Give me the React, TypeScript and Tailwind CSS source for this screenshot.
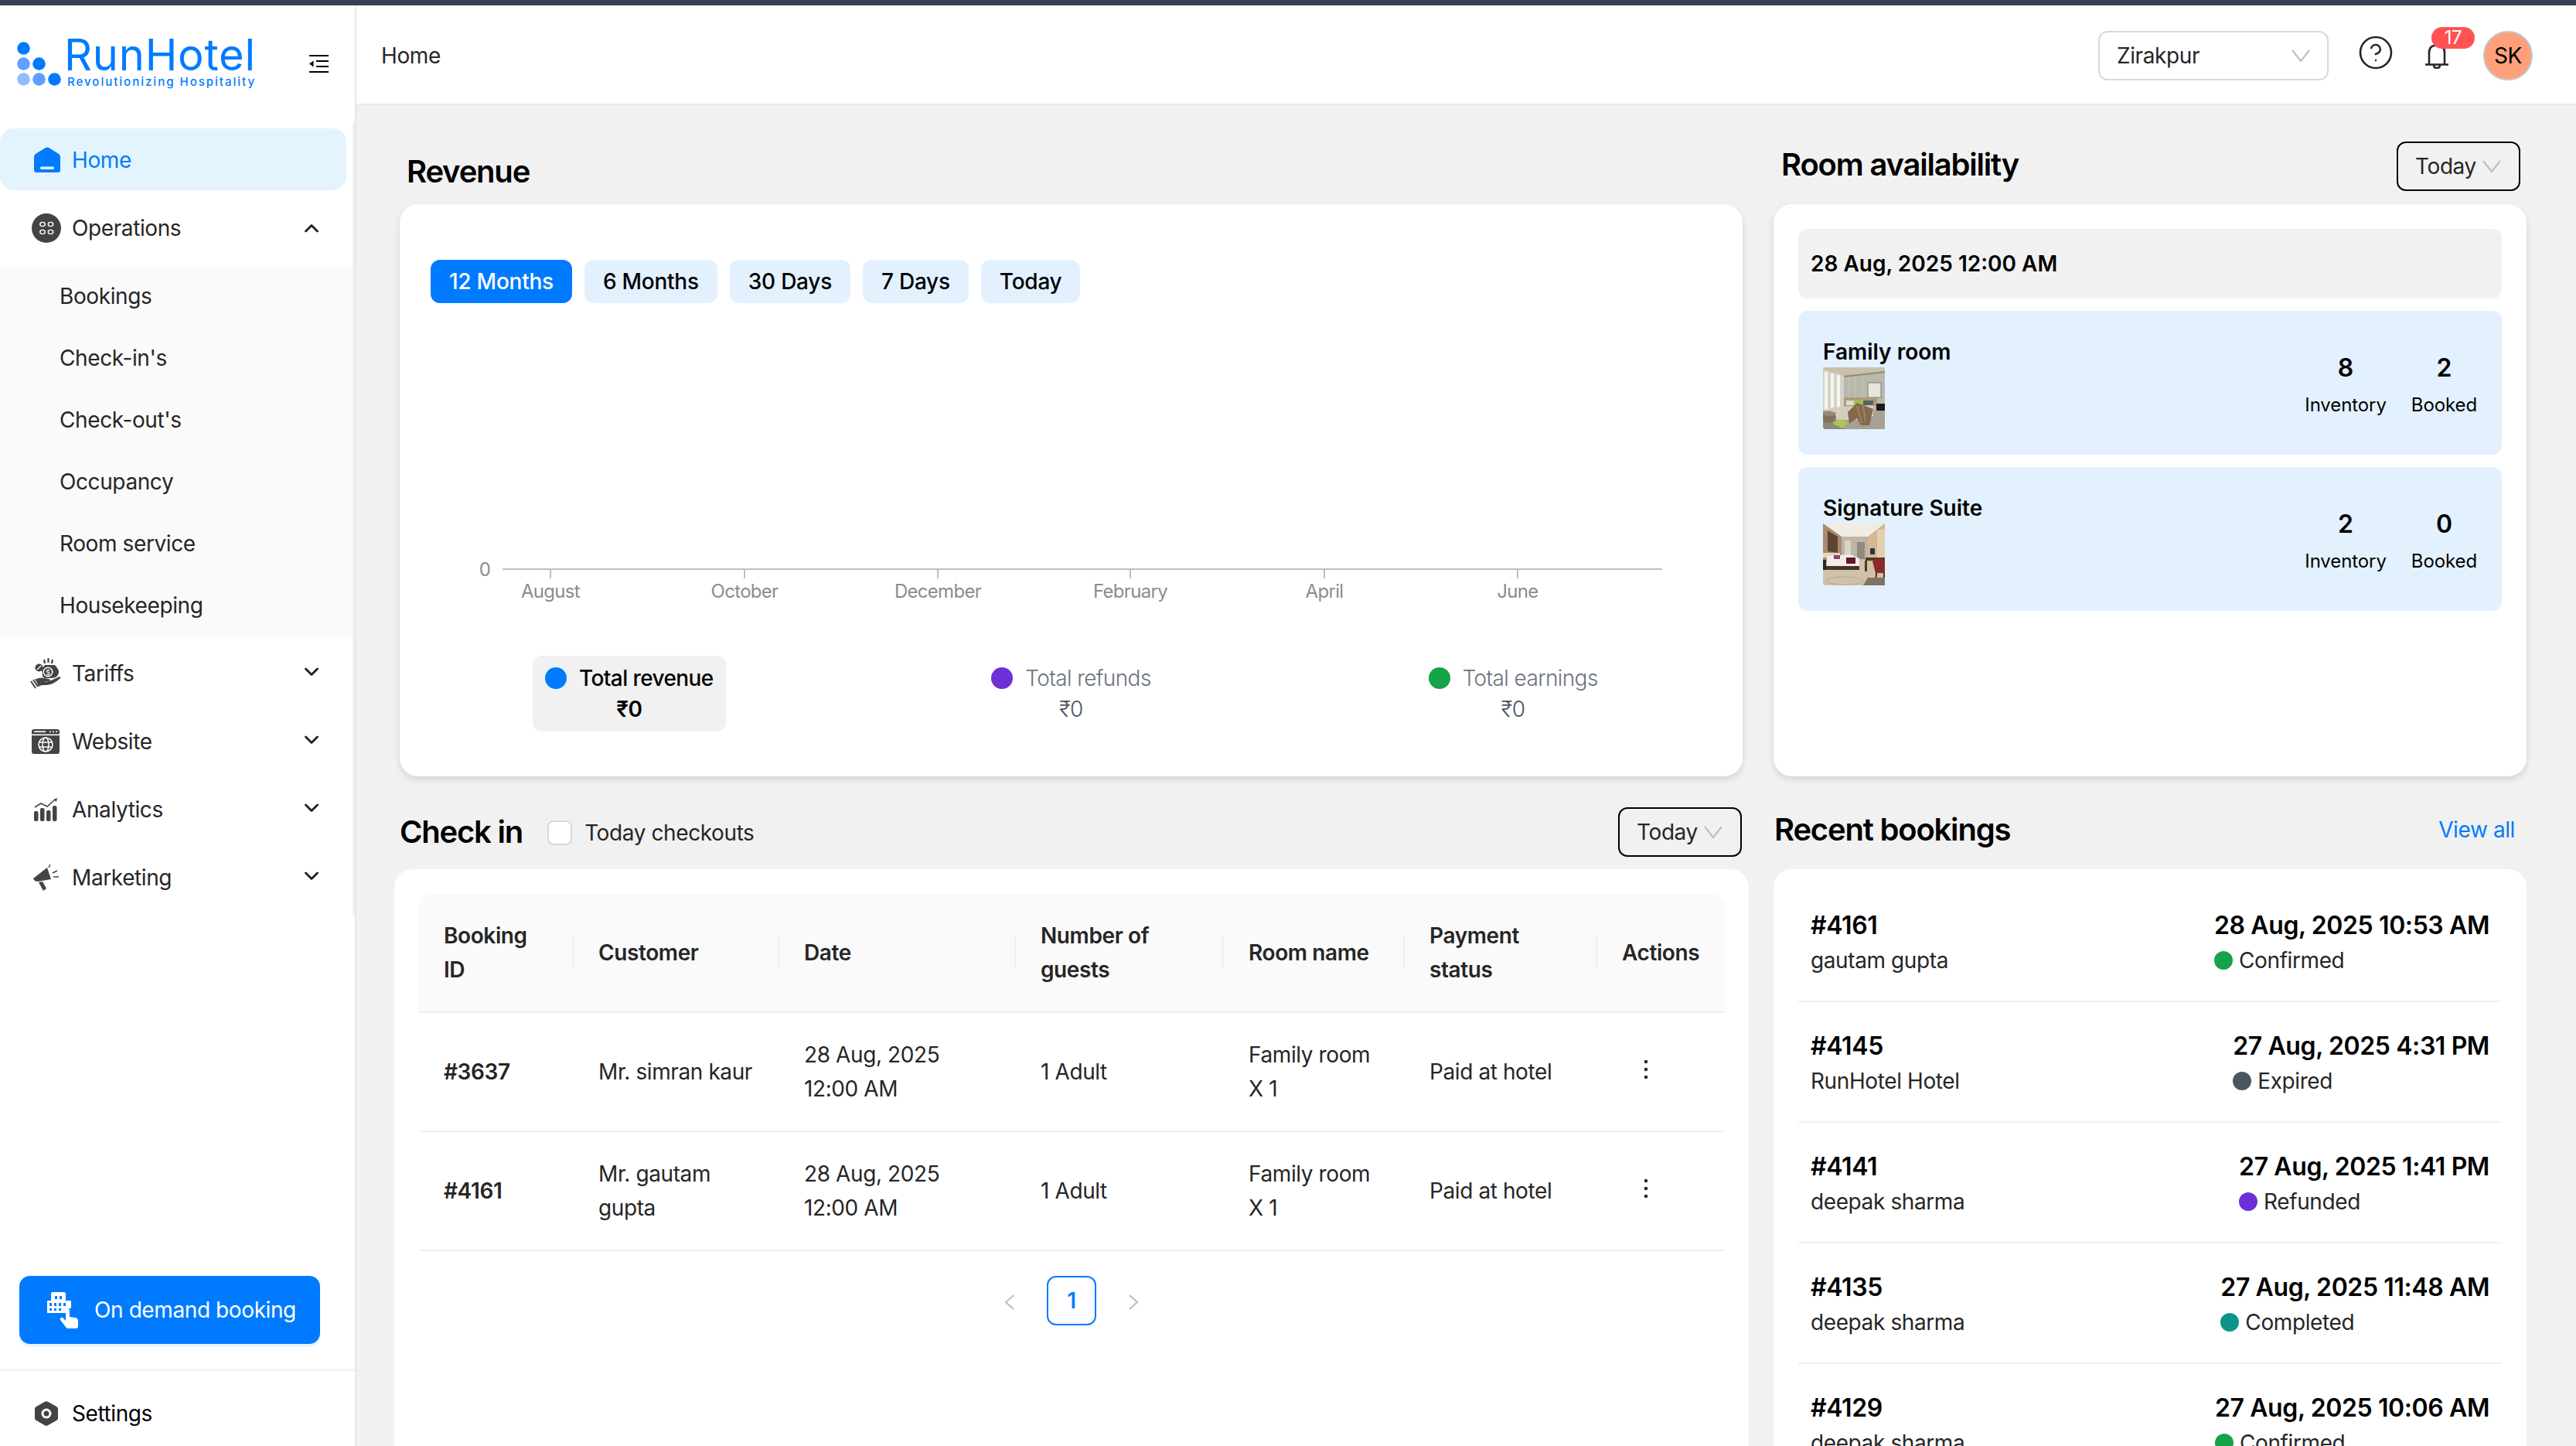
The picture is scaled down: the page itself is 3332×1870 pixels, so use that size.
import { CircleHelp } from "lucide-react";

const Down = ({ className = "stroke-[#bfbfbf]" }: { className?: string }) => (
  <svg width="24" height="16" viewBox="0 0 24 16" fill="none" className={className}>
    <path d="M1 1l11 14L23 1" strokeWidth="2.2" />
  </svg>
);

const Caret = ({ up = false }: { up?: boolean }) => (
  <svg width="18" height="12" viewBox="0 0 18 12" fill="none" className="stroke-[#1f1f1f]">
    <path d={up ? "M1.5 10L9 2.5 16.5 10" : "M1.5 2L9 9.5 16.5 2"} strokeWidth="2.8" strokeLinecap="round" strokeLinejoin="round" />
  </svg>
);

const HomeIcon = () => (
  <svg width="34" height="33" viewBox="0 0 34 33">
    <path fill="#007bff" d="M15 1L2 9Q0 10.5 0 13V30Q0 33 3 33H31Q34 33 34 30V13Q34 10.5 32 9L19 1Q17 0 15 1Z" />
    <rect x="8" y="25.5" width="18" height="3.5" rx="1.7" fill="#e3f4ff" />
  </svg>
);

const OperationsIcon = () => (
  <svg width="38" height="38" viewBox="0 0 38 38">
    <circle cx="19" cy="19" r="19" fill="#444" />
    <g fill="none" stroke="#fff" strokeWidth="1.4">
      <ellipse cx="14" cy="14" rx="3.2" ry="2.6" />
      <ellipse cx="24.5" cy="14" rx="3.2" ry="2.6" />
      <ellipse cx="14" cy="24" rx="3.2" ry="2.6" />
      <ellipse cx="24.5" cy="24" rx="3.2" ry="2.6" />
    </g>
  </svg>
);

const TariffsIcon = () => (
  <svg width="40" height="41" viewBox="0 0 40 41">
    <path fill="#444" d="M19 9c-1 2-4 3-4 7 0 1 0 2 1 3-1 3 0 6 3 7l8 0c6 0 10-3 10-8 0-4-3-6-5-9z" />
    <circle cx="23" cy="18" r="6.5" fill="#fff" />
    <circle cx="23" cy="18" r="5" fill="#444" />
    <text x="23" y="21.5" textAnchor="middle" className="fill-white text-[9px]">$</text>
    <circle cx="11.5" cy="12.5" r="5" fill="#444" />
    <path d="M9 15l5-5" stroke="#fff" strokeWidth="1.2" />
    <path d="M19 7l-1-5M23.5 6V0M28 7l1-5" stroke="#444" strokeWidth="2.2" />
    <path fill="#444" d="M7 28c4-3 8-3 11-2l6 1c2 0 2 3 0 3h-6c3 1 7 0 11-2l9-4c1 0 2 1 1 2-5 5-12 9-19 9-4 0-7 0-9 2z" />
    <path d="M1 30l6 9M4 28l6 9M7 27l5 7" stroke="#444" strokeWidth="2" />
  </svg>
);

const WebsiteIcon = () => (
  <svg width="36" height="32" viewBox="0 0 36 32">
    <rect width="36" height="32" rx="3" fill="#444" />
    <rect y="6.5" width="36" height="1.6" fill="#fff" />
    <rect x="3" y="2.4" width="15" height="1.6" fill="#fff" />
    <circle cx="24" cy="3.2" r="1" fill="#fff" />
    <circle cx="28" cy="3.2" r="1" fill="#fff" />
    <circle cx="32" cy="3.2" r="1" fill="#fff" />
    <g fill="none" stroke="#fff" strokeWidth="1.5">
      <circle cx="18" cy="20" r="9" />
      <ellipse cx="18" cy="20" rx="4" ry="9" />
      <path d="M9.5 17h17M9.5 23h17" />
    </g>
  </svg>
);

const AnalyticsIcon = () => (
  <svg width="30" height="30" viewBox="0 0 30 30">
    <g fill="#444">
      <rect x="0" y="17" width="5.5" height="13" rx="2" />
      <rect x="8" y="13" width="5.5" height="17" rx="2" />
      <rect x="16" y="16" width="5.5" height="14" rx="2" />
      <rect x="24" y="10" width="5.5" height="20" rx="2" />
      <path d="M1 12l8-5 8 4 9-8" fill="none" stroke="#444" strokeWidth="1.6" />
      <path d="M30 0l-1 5-4-3z" />
    </g>
  </svg>
);

const MarketingIcon = () => (
  <svg width="36" height="36" viewBox="0 0 36 36">
    <g fill="#444">
      <path d="M2 19L20 5l5 15-17 3q-5 0-6-4z" />
      <path d="M9 24l5-1 5 9-4 3z" />
    </g>
    <path d="M22 5l2-4M27 12l6-3M28 17h7" stroke="#444" strokeWidth="1.4" />
  </svg>
);

const BookingIcon = () => (
  <svg width="40" height="47" viewBox="0 0 40 47">
    <path fill="#fff" fillRule="evenodd" d="M5 11V2q0-2 2-2h15q2 0 2 2v9h6q1 0 1 1v9q-4-1-6 2v4H0V12q0-1 1-1zm5-6v4h3V5zm6 0v4h3V5zM3 14v4h3v-4zm6 0v4h3v-4zm6 0v4h3v-4zm6 0v4h3v-4zM3 21v3h3v-3zm6 0v3h3v-3zm6 0v3h3v-3z" />
    <path fill="#fff" d="M24 24q0-3 2.500-3t2.500 3v8l7 1q4 .5 4 4v7q0 3-3 3H27q-2 0-3-2l-7-9q-1-2 1-3t3 1l3 3z" />
  </svg>
);

const SettingsIcon = () => (
  <svg width="30" height="32" viewBox="0 0 30 32">
    <path fill="#444" d="M13 .8q2-1 4 0l11 6.200q2 1 2 3v12q0 2-2 3l-11 6.200q-2 1-4 0L2 25q-2-1-2-3V10q0-2 2-3z" />
    <circle cx="15" cy="16" r="5" fill="none" stroke="#fff" strokeWidth="3" />
  </svg>
);

const FoldIcon = () => (
  <svg width="25" height="23" viewBox="0 0 25 23" className="fill-black">
    <rect width="25" height="2" />
    <rect y="21" width="25" height="2" />
    <rect x="9" y="7" width="16" height="2" />
    <rect x="9" y="14" width="16" height="2" />
    <path d="M0 11.500L5.500 7.500v8z" />
  </svg>
);

const BellIcon = () => (
  <svg width="30" height="32" viewBox="0 0 30 32" fill="none" stroke="#262626" strokeWidth="2.6">
    <path d="M0 26.500h30M5 26.500V11Q5 1.500 15 1.500T25 11v15.500" />
    <path d="M11 27q0 4 4 4t4-4" />
  </svg>
);

const Kebab = () => (
  <svg width="24" height="32" viewBox="0 0 24 32" className="fill-[#262626] ml-[19px] -mt-[4px]">
    <circle cx="12" cy="5" r="2.300" />
    <circle cx="12" cy="15" r="2.300" />
    <circle cx="12" cy="25" r="2.300" />
  </svg>
);

const FamilyThumb = () => (
  <svg width="80" height="80" viewBox="0 0 80 80" className="rounded-bl-[4px]">
    <rect width="80" height="80" fill="#b9b8ab" />
    <path d="M0 0h80v5L27 11 0 3z" fill="#c9c2a8" />
    <path d="M27 11l53-6v2L27 13z" fill="#8f8c7c" />
    <path d="M0 3l27 8v45H0z" fill="#d3d3ca" />
    <path d="M2 6h4v48H2zM10 8h4v47h-4zM18 10h4v45h-4z" fill="#f6f6f1" />
    <path d="M33 12v28M42 11v29M51 10v30" stroke="#c8c7bb" strokeWidth="1" />
    <rect x="58" y="20" width="17" height="19" fill="#e6e6df" stroke="#7f7d72" />
    <rect x="27" y="39" width="43" height="11" fill="#b09a78" />
    <rect x="52" y="43" width="13" height="6" fill="#5a625c" />
    <rect x="30" y="43" width="10" height="6" fill="#e0dbd0" />
    <rect x="40" y="42" width="12" height="7" fill="#a5bd4e" />
    <rect x="69" y="47" width="11" height="14" fill="#1c1a18" />
    <path d="M0 56h80v24H0z" fill="#a8a092" />
    <path d="M0 66l30 14H0z" fill="#8f8778" />
    <path d="M9 52l56-3v14l-11 5H14z" fill="#d4cdc0" />
    <path d="M32 58l12-12 21 8-5 21H49l-5-9-10 7z" fill="#85694c" />
    <path d="M44 50l6 22M52 50l3 20" stroke="#a58a69" strokeWidth="1.5" />
    <ellipse cx="8" cy="65" rx="9" ry="7" fill="#85705a" />
    <ellipse cx="8" cy="60" rx="9" ry="3" fill="#9a8570" />
    <path d="M13 73l8-6 11 4-7 8z" fill="#a9c84e" />
  </svg>
);

const SuiteThumb = () => (
  <svg width="80" height="80" viewBox="0 0 80 80" className="rounded-bl-[4px]">
    <rect width="80" height="80" fill="#cfc2a8" />
    <path d="M0 0h80L58 17H24z" fill="#f1ece3" />
    <path d="M0 0l24 17v33H0z" fill="#a98c6c" />
    <path d="M6 9l13 8v21L6 36z" fill="#5d4432" />
    <path d="M0 38h22v6H0z" fill="#e8d5b5" />
    <path d="M80 0L58 17v33h22z" fill="#d7b88e" />
    <path d="M70 8h10v36H70z" fill="#e6cfae" />
    <rect x="24" y="17" width="34" height="30" fill="#bdb5a6" />
    <rect x="28" y="22" width="8" height="24" fill="#d9d4c8" />
    <rect x="44" y="24" width="10" height="22" fill="#8f8a7e" />
    <rect x="61" y="32" width="6" height="8" fill="#25364f" />
    <path d="M5 42l30-2 12 5v10H5z" fill="#f1ecea" />
    <rect x="30" y="44" width="12" height="8" fill="#66151d" />
    <rect x="14" y="41" width="8" height="5" fill="#8f3f6b" />
    <path d="M2 55h45v5H2z" fill="#3f3528" />
    <rect x="0" y="47" width="4" height="13" fill="#2f2820" />
    <rect x="55" y="44" width="25" height="4" fill="#4a3a2c" />
    <path d="M54 48h3v14h-3z" fill="#4a3a2c" />
    <path d="M64 49q8-6 16-3v18H68z" fill="#8a2a2a" />
    <path d="M68 64h2l-1 13h-2zM78 64h2v12h-2z" fill="#5a2a24" />
    <path d="M58 70h22v10H52z" fill="#7d7464" />
    <ellipse cx="28" cy="74" rx="24" ry="5" fill="none" stroke="#b7a98f" strokeWidth="1" />
  </svg>
);

const subItems = ["Bookings", "Check-in's", "Check-out's", "Occupancy", "Room service", "Housekeeping"];

const mainItems = [
  { label: "Tariffs", icon: <TariffsIcon /> },
  { label: "Website", icon: <WebsiteIcon /> },
  { label: "Analytics", icon: <AnalyticsIcon /> },
  { label: "Marketing", icon: <MarketingIcon /> },
];

const Sidebar = () => (
  <aside className="w-[461px] shrink-0 border-r-2 border-[#e5e7eb] bg-white flex flex-col">
    <div className="h-[152px] shrink-0 flex items-start pt-[43px] pl-[22px]">
      <svg width="57" height="57" viewBox="0 0 57 57" className="mt-[4px]">
        <circle cx="8.500" cy="8.500" r="8.300" fill="#007bff" />
        <circle cx="8.500" cy="28.500" r="8.300" fill="#5f9fff" />
        <circle cx="28.500" cy="28.500" r="8.300" fill="#007bff" />
        <circle cx="8.500" cy="48.500" r="8.300" fill="#93bdff" />
        <circle cx="28.500" cy="48.500" r="8.300" fill="#5f9fff" />
        <circle cx="48.500" cy="48.500" r="8.300" fill="#007bff" />
      </svg>
      <div className="ml-[4px] w-[244px] text-[#007bff]">
        <div className="text-[56px] leading-[42px] tracking-[0.8px] whitespace-nowrap">RunHotel</div>
        <div className="text-[15px] leading-[17px] mt-[5px] ml-[4px] font-medium tracking-[2px] whitespace-nowrap">Revolutionizing Hospitality</div>
      </div>
      <div className="ml-[73px] mt-[21px]">
        <FoldIcon />
      </div>
    </div>

    <nav className="h-[1024px] shrink-0 border-r-[3px] border-[#f0f0f0] pt-[7px] text-[28px] leading-[40px] text-[#262626]">
      <div className="h-[80px] mr-[8px] rounded-[18px] bg-[#e3f4ff] flex items-center pl-[44px] text-[#007bff]">
        <HomeIcon />
        <span className="ml-[15px] mt-[1px]">Home</span>
      </div>
      <div className="h-[80px] mt-[9px] flex items-center pl-[41px] pr-[44px]">
        <OperationsIcon />
        <span className="ml-[14px]">Operations</span>
        <span className="ml-auto flex">
          <Caret up />
        </span>
      </div>
      <div className="mt-[8px] bg-[#fafafa]">
        {subItems.map((item) => (
          <div key={item} className="h-[80px] flex items-center pl-[77px]">
            {item}
          </div>
        ))}
      </div>
      <div className="mt-[8px] flex flex-col gap-[8px]">
        {mainItems.map((item) => (
          <div key={item.label} className="h-[80px] flex items-center pl-[39px] pr-[44px]">
            <span className="w-[40px] flex justify-center">{item.icon}</span>
            <span className="ml-[14px]">{item.label}</span>
            <span className="ml-auto flex -mt-[4px]">
              <Caret />
            </span>
          </div>
        ))}
      </div>
    </nav>

    <div className="mt-auto px-[25px] mb-[33px]">
      <div className="h-[88px] w-[389px] rounded-[14px] bg-[#007bff] shadow-[0_4px_0_#e6f4ff] flex items-center pl-[36px] text-white text-[28px]">
        <BookingIcon />
        <span className="ml-[21px] whitespace-nowrap">On demand booking</span>
      </div>
    </div>
    <div className="h-[99px] shrink-0 border-t-2 border-[#f0f0f0] pt-[35px] pl-[45px] flex items-start text-[28px] leading-[40px] text-black">
      <span className="mt-[4px] flex">
        <SettingsIcon />
      </span>
      <span className="ml-[18px]">Settings</span>
    </div>
  </aside>
);

const TopBar = () => (
  <header className="h-[129px] shrink-0 bg-white border-b-2 border-[#ebebeb] flex items-center pt-[2px] pl-[32px] pr-[56px] text-[28px] text-[#262626]">
    <span>Home</span>
    <div className="ml-auto h-[64px] w-[298px] rounded-[12px] border-2 border-[#d9d9d9] flex items-center justify-between pl-[22px] pr-[22px]">
      <span>Zirakpur</span>
      <Down />
    </div>
    <CircleHelp size={48} strokeWidth={1.3} className="ml-[37px] mb-[8px] text-[#262626]" />
    <div className="relative ml-[40px] mt-[2px] flex">
      <BellIcon />
      <span className="absolute -top-[22px] left-[8px] h-[28px] w-[56px] rounded-full bg-[#ff5252] text-white text-[24px] leading-[28px] text-center">17</span>
    </div>
    <div className="ml-[45px] w-[64px] h-[64px] rounded-full bg-[#ffa07a] border-2 border-[#c4c4c4] flex items-center justify-center text-black">SK</div>
  </header>
);

const TodaySelect = () => (
  <div className="h-[64px] w-[160px] rounded-[12px] border-2 border-black flex items-center pl-[22px] text-[28px] text-[#262626]">
    <span>Today</span>
    <span className="ml-[8px] flex">
      <Down />
    </span>
  </div>
);

const ranges = ["12 Months", "6 Months", "30 Days", "7 Days", "Today"];
const months = [
  { label: "August", x: 195 },
  { label: "October", x: 446 },
  { label: "December", x: 696 },
  { label: "February", x: 945 },
  { label: "April", x: 1196 },
  { label: "June", x: 1446 },
];

const RevenueChart = () => (
  <svg width="1737" height="456" viewBox="0 0 1737 456" className="block tracking-[-0.7px]">
    <text x="110" y="353" textAnchor="middle" className="fill-[#8c8c8c] text-[24px]">0</text>
    <path d="M133 344H1633" stroke="#bfbfbf" strokeWidth="2" />
    {months.map((m) => (
      <g key={m.label}>
        <path d={`M${m.x} 344v12`} stroke="#bfbfbf" strokeWidth="2" />
        <text x={m.x} y="381" textAnchor="middle" className="fill-[#8c8c8c] text-[24px]">{m.label}</text>
      </g>
    ))}
  </svg>
);

const legend = [
  { label: "Total revenue", color: "bg-[#007bff]", active: true },
  { label: "Total refunds", color: "bg-[#6d2fd6]", active: false },
  { label: "Total earnings", color: "bg-[#16a34a]", active: false },
];

const Revenue = () => (
  <div>
    <div className="h-[128px] flex items-end pb-[10px] pl-[16px]">
      <h2 className="text-[40px] leading-[64px] font-semibold tracking-[-1.2px] text-black">Revenue</h2>
    </div>
    <div className="h-[740px] ml-[7px] mr-[8px] rounded-[24px] bg-white shadow-[0_4px_8px_rgba(0,0,0,0.12)] pt-[72px]">
      <div className="flex gap-[16px] pl-[40px]">
        {ranges.map((r, i) => (
          <div
            key={r}
            className={
              i === 0
                ? "h-[56px] px-[24px] rounded-[12px] bg-[#007bff] text-white text-[28px] font-medium leading-[56px] tracking-[-0.25px]"
                : "h-[56px] px-[24px] rounded-[12px] bg-[#e3f1ff] text-black text-[28px] font-medium leading-[56px] tracking-[-0.25px]"
            }
          >
            {r}
          </div>
        ))}
      </div>
      <RevenueChart />
      <div className="grid grid-cols-3 justify-items-center pl-[11px] pr-[11px] tracking-[-0.6px]">
        {legend.map((l) => (
          <div
            key={l.label}
            className={
              l.active
                ? "h-[98px] px-[16px] py-[9px] rounded-[12px] bg-[#f1f1f1] text-black font-medium text-[28px] leading-[40px]"
                : "h-[98px] px-[16px] py-[9px] text-[#6b7280] text-[28px] leading-[40px] font-light"
            }
          >
            <div className="flex items-center gap-[16px] whitespace-nowrap">
              <span className={`w-[28px] h-[28px] rounded-full ${l.color}`} />
              {l.label}
            </div>
            <div className={l.active ? "text-center font-semibold" : "text-center text-[#4b5563]"}>₹0</div>
          </div>
        ))}
      </div>
    </div>
  </div>
);

const rooms = [
  { name: "Family room", inventory: 8, booked: 2, thumb: <FamilyThumb /> },
  { name: "Signature Suite", inventory: 2, booked: 0, thumb: <SuiteThumb /> },
];

const RoomAvailability = () => (
  <div>
    <div className="h-[128px] flex items-center justify-between pt-[47px] pb-[17px] pl-[10px] pr-[8px]">
      <h2 className="text-[40px] leading-[64px] font-semibold tracking-[-1.2px] text-black mb-[5px]">Room availability</h2>
      <TodaySelect />
    </div>
    <div className="h-[740px] rounded-[24px] bg-white shadow-[0_4px_8px_rgba(0,0,0,0.12)] p-[32px] flex flex-col gap-[16px]">
      <div className="h-[90px] rounded-[12px] bg-[#f1f1f1] flex items-center pl-[16px] text-[28px] font-semibold text-black tracking-normal">
        28 Aug, 2025 12:00 AM
      </div>
      {rooms.map((room) => (
        <div key={room.name} className="h-[186px] rounded-[12px] bg-[#e3f1ff] px-[32px] pt-[33px] flex justify-between">
          <div>
            <div className="text-[28px] leading-[40px] font-semibold text-black tracking-normal">{room.name}</div>
            {room.thumb}
          </div>
          <div className="flex gap-[32px] pt-[17px] tracking-[-0.1px]">
            <div className="flex flex-col items-center">
              <span className="text-[32px] leading-[48px] font-semibold text-black">{room.inventory}</span>
              <span className="text-[24px] leading-[48px] text-black">Inventory</span>
            </div>
            <div className="flex flex-col items-center">
              <span className="text-[32px] leading-[48px] font-semibold text-black">{room.booked}</span>
              <span className="text-[24px] leading-[48px] text-black">Booked</span>
            </div>
          </div>
        </div>
      ))}
    </div>
  </div>
);

const columns = [
  { label: "Booking ID", width: "w-[200px]" },
  { label: "Customer", width: "w-[266px]" },
  { label: "Date", width: "w-[306px]" },
  { label: "Number of guests", width: "w-[269px]" },
  { label: "Room name", width: "w-[234px]" },
  { label: "Payment status", width: "w-[249px]" },
  { label: "Actions", width: "w-[165px]" },
];

const checkins = [
  { id: "#3637", customer: "Mr. simran kaur" },
  { id: "#4161", customer: "Mr. gautam gupta" },
];

const CheckIn = () => (
  <div>
    <div className="h-[64px] flex items-center ml-[7px] mr-[9px]">
      <h2 className="text-[40px] leading-[64px] font-semibold tracking-[-1.2px] text-black">Check in</h2>
      <span className="ml-[32px] w-[32px] h-[32px] rounded-[8px] border-2 border-[#d9d9d9] bg-white mt-[2px]" />
      <span className="ml-[16px] text-[28px] text-[#262626] mt-[2px]">Today checkouts</span>
      <span className="ml-auto">
        <TodaySelect />
      </span>
    </div>
    <div className="mt-[16px] h-[800px] rounded-[24px] bg-white p-[32px]">
      <table className="table-fixed w-[1689px] border-separate border-spacing-0 text-[28px] leading-[44px] text-[#262626]">
        <thead>
          <tr>
            {columns.map((c, i) => (
              <th
                key={c.label}
                className={`${c.width} relative h-[154px] bg-[#fafafa] border-b-2 border-[#f0f0f0] px-[32px] text-left font-semibold ${i === 0 ? "rounded-tl-[16px]" : ""} ${i === 6 ? "rounded-tr-[16px]" : ""}`}
              >
                {c.label}
                {i < 6 && <span className="absolute right-0 top-[53px] h-[44px] w-[2px] bg-[#f0f0f0]" />}
              </th>
            ))}
          </tr>
        </thead>
        <tbody>
          {checkins.map((row) => (
            <tr key={row.id}>
              <td className="h-[154px] border-b-2 border-[#f0f0f0] px-[32px] font-semibold">{row.id}</td>
              <td className="border-b-2 border-[#f0f0f0] px-[32px]">{row.customer}</td>
              <td className="border-b-2 border-[#f0f0f0] px-[32px]">28 Aug, 2025 12:00 AM</td>
              <td className="border-b-2 border-[#f0f0f0] px-[32px]">1 Adult</td>
              <td className="border-b-2 border-[#f0f0f0] px-[32px]">Family room X 1</td>
              <td className="border-b-2 border-[#f0f0f0] px-[32px]">Paid at hotel</td>
              <td className="border-b-2 border-[#f0f0f0] px-[32px]">
                <Kebab />
              </td>
            </tr>
          ))}
        </tbody>
      </table>
      <div className="mt-[32px] flex justify-center gap-[16px]">
        <div className="w-[64px] h-[64px] pt-[4px] flex items-center justify-center">
          <svg width="14" height="20" viewBox="0 0 14 20" fill="none" stroke="#bfbfbf" strokeWidth="2.200">
            <path d="M12 1L2 10l10 9" />
          </svg>
        </div>
        <div className="w-[64px] h-[64px] rounded-[12px] border-2 border-[#007bff] flex items-center justify-center text-[28px] font-semibold text-[#007bff]">
          1
        </div>
        <div className="w-[64px] h-[64px] pt-[4px] flex items-center justify-center">
          <svg width="14" height="20" viewBox="0 0 14 20" fill="none" stroke="#bfbfbf" strokeWidth="2.200">
            <path d="M2 1l10 9-10 9" />
          </svg>
        </div>
      </div>
    </div>
  </div>
);

const bookings = [
  { id: "#4161", name: "gautam gupta", date: "28 Aug, 2025 10:53 AM", status: "Confirmed", color: "bg-[#16a34a]" },
  { id: "#4145", name: "RunHotel Hotel", date: "27 Aug, 2025 4:31 PM", status: "Expired", color: "bg-[#4b5563]" },
  { id: "#4141", name: "deepak sharma", date: "27 Aug, 2025 1:41 PM", status: "Refunded", color: "bg-[#6d2fd6]" },
  { id: "#4135", name: "deepak sharma", date: "27 Aug, 2025 11:48 AM", status: "Completed", color: "bg-[#0d9488]" },
  { id: "#4129", name: "deepak sharma", date: "27 Aug, 2025 10:06 AM", status: "Confirmed", color: "bg-[#16a34a]" },
];

const RecentBookings = () => (
  <div>
    <div className="h-[64px] flex items-center justify-between pl-[1px] pr-[15px] pb-[6px]">
      <h2 className="text-[40px] leading-[64px] font-semibold tracking-[-1.2px] text-black">Recent bookings</h2>
      <a className="text-[28px] text-[#007bff]">View all</a>
    </div>
    <div className="mt-[16px] h-[800px] rounded-[24px] bg-white px-[32px] py-[16px]">
      {bookings.map((b) => (
        <div key={b.id} className="h-[156px] border-b-2 border-[#f0f0f0] px-[16px] pt-[32px] flex justify-between">
          <div>
            <div className="text-[32px] leading-[50px] font-semibold text-black">{b.id}</div>
            <div className="text-[28px] leading-[40px] text-[#262626]">{b.name}</div>
          </div>
          <div>
            <div className="text-[32px] leading-[50px] font-semibold text-black whitespace-nowrap">{b.date}</div>
            <div className="flex items-center gap-[8px] text-[28px] leading-[40px] text-[#262626]">
              <span className={`w-[24px] h-[24px] rounded-full ${b.color}`} />
              {b.status}
            </div>
          </div>
        </div>
      ))}
    </div>
  </div>
);

export default function App() {
  return (
    <div className="w-[3332px] h-[1870px] overflow-hidden flex flex-col tracking-[-0.4px] [font-family:Inter,sans-serif]">
      <div className="h-[7px] shrink-0 bg-[#373f51]" />
      <div className="flex flex-1 min-h-0">
        <Sidebar />
        <main className="flex-1 min-w-0 flex flex-col">
          <TopBar />
          <div className="flex-1 min-h-0 overflow-hidden bg-[#f1f1f1] pl-[49px]">
            <div className="grid grid-cols-[1752px_974px] gap-x-[32px] gap-y-[40px]">
              <Revenue />
              <RoomAvailability />
              <CheckIn />
              <RecentBookings />
            </div>
          </div>
        </main>
      </div>
    </div>
  );
}
